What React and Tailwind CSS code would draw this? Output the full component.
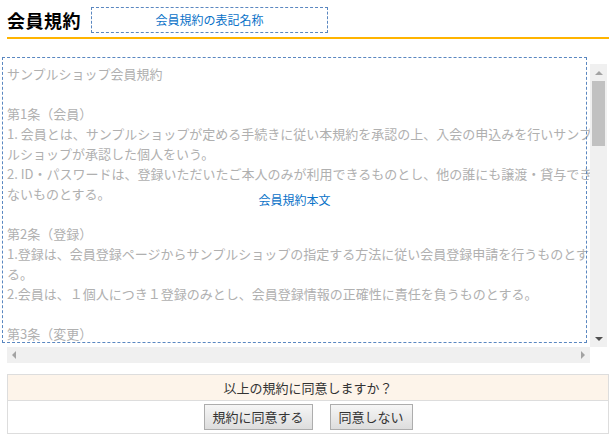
import React from "react";

const lines = [
  "サンプルショップ会員規約",
  "",
  "第1条（会員）",
  "1. 会員とは、サンプルショップが定める手続きに従い本規約を承認の上、入会の申込みを行いサンプ",
  "ルショップが承認した個人をいう。",
  "2. ID・パスワードは、登録いただいたご本人のみが利用できるものとし、他の誰にも譲渡・貸与でき",
  "ないものとする。",
  "",
  "第2条（登録）",
  "1.登録は、会員登録ページからサンプルショップの指定する方法に従い会員登録申請を行うものとす",
  "る。",
  "2.会員は、１個人につき１登録のみとし、会員登録情報の正確性に責任を負うものとする。",
  "",
  "第3条（変更）",
  "1.会員は、登録内容に変更が生じた場合、速やかに所定の方法により変更の届出を行うものとする。",
];

const Arrow = ({ dir, color }) => {
  const pts = {
    up: "0,4 4,0 8,4",
    down: "0,0 8,0 4,4",
    left: "4,0 4,8 0,4",
    right: "0,0 0,8 4,4",
  }[dir];
  const vertical = dir === "up" || dir === "down";
  return (
    <svg width={vertical ? 8 : 4} height={vertical ? 4 : 8} viewBox={vertical ? "0 0 8 4" : "0 0 4 8"}>
      <polygon points={pts} fill={color} />
    </svg>
  );
};

export default function App() {
  return (
    <div
      className="w-[616px] h-[443px] bg-white text-[#333] overflow-hidden"
      style={{ fontFamily: '"Noto Sans CJK JP", "Noto Sans", sans-serif' }}
    >
      {/* 見出し */}
      <div className="mx-[7px] pt-[7px] pb-[4px] border-b-2 border-[#ffb400] flex items-center">
        <h1 className="text-[18px] font-bold leading-none text-black tracking-[0.5px]">会員規約</h1>
        <div className="ml-[10px] w-[237px] h-[26px] border border-dashed border-[#5a87c0] flex items-center justify-center text-[12px] text-[#0a72c8]">
          会員規約の表記名称
        </div>
      </div>

      {/* 規約本文 */}
      <div className="mx-[7px] mt-[25px] grid grid-cols-[583px_17px] grid-rows-[283px_16px]">
        <div className="relative">
          <div className="h-full overflow-hidden text-[13px] leading-[20px] text-[#b0b0b0]">
            {lines.map((l, i) => (
              <div key={i} className="whitespace-nowrap h-[20px]">
                {l}
              </div>
            ))}
          </div>
          <div className="absolute -top-[7px] -left-[5px] right-[3px] bottom-[4px] border border-dashed border-[#5a87c0] flex items-center justify-center">
            <span className="text-[12px] text-[#0a72c8]">会員規約本文</span>
          </div>
        </div>
        <div className="bg-[#f0f0f0] flex flex-col items-center">
          <div className="h-[17px] flex items-center justify-center">
            <Arrow dir="up" color="#a3a3a3" />
          </div>
          <div className="w-[13px] h-[65px] bg-[#c1c1c1]" />
          <div className="flex-1" />
          <div className="h-[17px] flex items-center justify-center">
            <Arrow dir="down" color="#505050" />
          </div>
        </div>
        <div className="bg-[#f0f0f0] flex items-center justify-between px-[5px]">
          <Arrow dir="left" color="#a3a3a3" />
          <Arrow dir="right" color="#a3a3a3" />
        </div>
        <div className="bg-white" />
      </div>

      {/* 同意確認 */}
      <div className="mx-[7px] mt-[11px] border border-[#dddddd]">
        <div className="h-[26px] bg-[#fdf4ea] border-b border-[#dddddd] flex items-center justify-center text-[13px] text-[#333]">
          以上の規約に同意しますか？
        </div>
        <div className="h-[32px] flex items-center justify-center gap-[17px]">
          <button className="h-[26px] w-[109px] text-[13px] text-[#333] border border-[#adadad] bg-gradient-to-b from-[#f6f6f6] to-[#dddddd]">
            規約に同意する
          </button>
          <button className="h-[26px] w-[83px] text-[13px] text-[#333] border border-[#adadad] bg-gradient-to-b from-[#f6f6f6] to-[#dddddd]">
            同意しない
          </button>
        </div>
      </div>
    </div>
  );
}
